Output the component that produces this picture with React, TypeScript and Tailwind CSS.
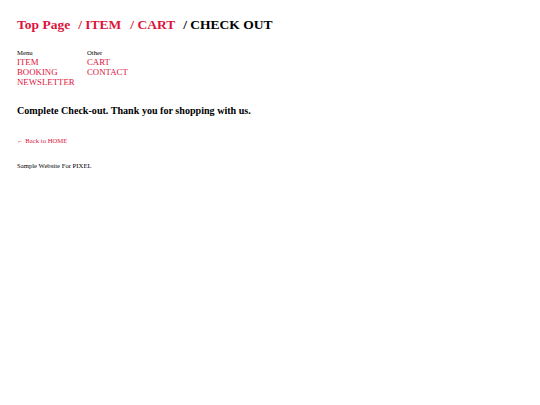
import React from "react";

export default function App() {
  const red = "text-[#dc143c]";
  return (
    <div className="min-h-[405px] bg-white px-[17px] pt-[17px] font-['Liberation_Serif',serif] text-black">
      <h1 className="flex text-[13.5px] font-bold leading-[16px]">
        <span className={`${red} mr-[8px]`}>Top Page</span>
        <span className={`${red} mr-[9px]`}>/ ITEM</span>
        <span className={`${red} mr-[8px]`}>/ CART</span>
        <span>/ CHECK OUT</span>
      </h1>
      <div className="mt-[15px] flex">
        <div className="w-[70px]">
          <div className="text-[6.7px] leading-[9px]">Menu</div>
          <div className={`${red} text-[8.8px] leading-[10px]`}>ITEM</div>
          <div className={`${red} text-[8.8px] leading-[10px]`}>BOOKING</div>
          <div className={`${red} text-[8.8px] leading-[10px]`}>NEWSLETTER</div>
        </div>
        <div>
          <div className="text-[6.7px] leading-[9px]">Other</div>
          <div className={`${red} text-[8.8px] leading-[10px]`}>CART</div>
          <div className={`${red} text-[8.8px] leading-[10px]`}>CONTACT</div>
        </div>
      </div>
      <h2 className="mt-[17px] text-[10.1px] font-bold leading-[14px]">
        Complete Check-out. Thank you for shopping with us.
      </h2>
      <div className={`${red} mt-[18px] text-[6.7px] leading-[9px]`}>← Back to HOME</div>
      <div className="mt-[16px] text-[6.7px] leading-[9px]">Sample Website For PIXEL</div>
    </div>
  );
}
